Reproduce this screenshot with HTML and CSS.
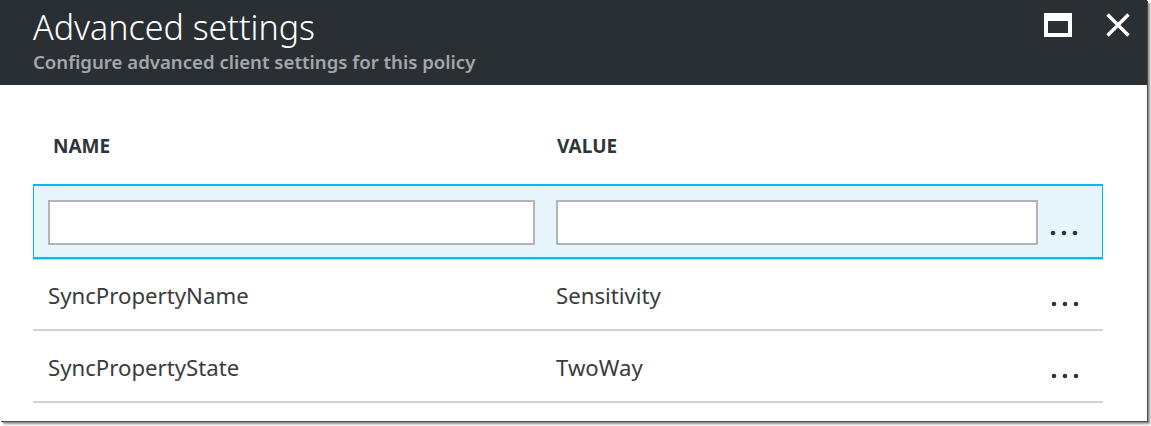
FILE: index.html
```html
<!DOCTYPE html>
<html lang="en">
<head>
<meta charset="utf-8">
<title>Advanced settings</title>
<link rel="stylesheet" href="styles.css">
</head>
<body>
<div class="panel">
  <header class="blade-header">
    <div class="titles">
      <h1 class="title">Advanced settings</h1>
      <p class="subtitle">Configure advanced client settings for this policy</p>
    </div>
    <div class="controls">
      <svg class="icon-max" width="28" height="24" viewBox="0 0 28 24"><path fill="#fff" fill-rule="evenodd" d="M0 0H28V24H0Z M4 8V20H24V8Z"/></svg>
      <svg class="icon-close" width="24" height="24" viewBox="0 0 24 24"><path stroke="#fff" stroke-width="3.4" d="M1.5 1.5L22.5 22.5M22.5 1.5L1.5 22.5"/></svg>
    </div>
  </header>
  <section class="table">
    <div class="head-row">
      <div class="th th-name">NAME</div>
      <div class="th th-value">VALUE</div>
    </div>
    <div class="row row-edit">
      <div class="cell cell-name"><input class="field field-name" type="text"></div>
      <div class="cell cell-value"><input class="field field-value" type="text"></div>
      <div class="cell cell-more"><svg class="dots" width="28" height="6" viewBox="0 0 28 6"><circle cx="3" cy="3" r="2.3"/><circle cx="14" cy="3" r="2.3"/><circle cx="25" cy="3" r="2.3"/></svg></div>
    </div>
    <div class="row">
      <div class="cell cell-name">SyncPropertyName</div>
      <div class="cell cell-value">Sensitivity</div>
      <div class="cell cell-more"><svg class="dots" width="28" height="6" viewBox="0 0 28 6"><circle cx="3" cy="3" r="2.3"/><circle cx="14" cy="3" r="2.3"/><circle cx="25" cy="3" r="2.3"/></svg></div>
    </div>
    <div class="row">
      <div class="cell cell-name">SyncPropertyState</div>
      <div class="cell cell-value">TwoWay</div>
      <div class="cell cell-more"><svg class="dots" width="28" height="6" viewBox="0 0 28 6"><circle cx="3" cy="3" r="2.3"/><circle cx="14" cy="3" r="2.3"/><circle cx="25" cy="3" r="2.3"/></svg></div>
    </div>
  </section>
</div>
</body>
</html>
```
FILE: styles.css
```css
* { box-sizing: border-box; }
html, body { margin: 0; padding: 0; background: #ffffff; }
body { font-family: "Noto Sans", "Open Sans", "Liberation Sans", sans-serif; width: 1151px; height: 426px; overflow: hidden; }

.panel {
  width: 1147px;
  height: 421px;
  background: #ffffff;
  box-shadow: 1px 1px 0 #4a4a4a, 3px 3px 2px rgba(0,0,0,0.45);
}

.blade-header {
  height: 85px;
  background: #2a2f34;
  display: flex;
  justify-content: space-between;
  padding: 5px 17px 0 33px;
}
.title {
  margin: 0;
  font-size: 34px;
  font-weight: 300;
  line-height: 45px;
  color: #ffffff;
}
.subtitle {
  margin: 0;
  font-size: 18.6px;
  font-weight: 600;
  line-height: 24px;
  color: #a3a7ab;
}
.controls {
  display: flex;
  align-items: flex-start;
  gap: 34px;
  padding-top: 8px;
}
.controls svg { display: block; }

.table {
  width: 1070px;
  margin-left: 33px;
}
.head-row {
  display: grid;
  grid-template-columns: 504px 1fr;
  padding: 49px 0 26px 20px;
}
.th {
  font-size: 19px;
  font-weight: 700;
  line-height: 24px;
  color: #2f353b;
}

.row {
  display: grid;
  grid-template-columns: 508px 482px 1fr;
  align-items: center;
  padding-left: 15px;
  height: 72px;
  border-bottom: 2px solid #d2d2d2;
  font-size: 22.2px;
  color: #3b3b3b;
}
.row .cell-name { padding-right: 21px; padding-top: 2px; }
.row .cell-value { padding-top: 2px; }
.row-edit {
  height: 75px;
  background: #e6f5fc;
  border-top: 2px solid #00bcf2;
  border-left: 1px solid #00bcf2;
  border-right: 1px solid #00bcf2;
  border-bottom: 2px solid #00bcf2;
  box-shadow: 0 1px 0 #cfcfcf;
  padding-left: 14px;
  align-items: start;
  padding-top: 14px;
}
.row-edit .cell-name, .row-edit .cell-value { padding-top: 0; }
.field {
  display: block;
  height: 45px;
  border: 2px solid #b4b4b4;
  background: #ffffff;
  margin: 0;
  outline: none;
}
.field-name { width: 487px; }
.field-value { width: 482px; }
.cell-more {
  display: flex;
  align-items: center;
  padding-left: 13px;
  padding-top: 20px;
  height: 100%;
}
.row-edit .cell-more { height: 45px; padding-top: 20px; padding-left: 12px; }
.dots { display: block; fill: #2f353b; }
```
